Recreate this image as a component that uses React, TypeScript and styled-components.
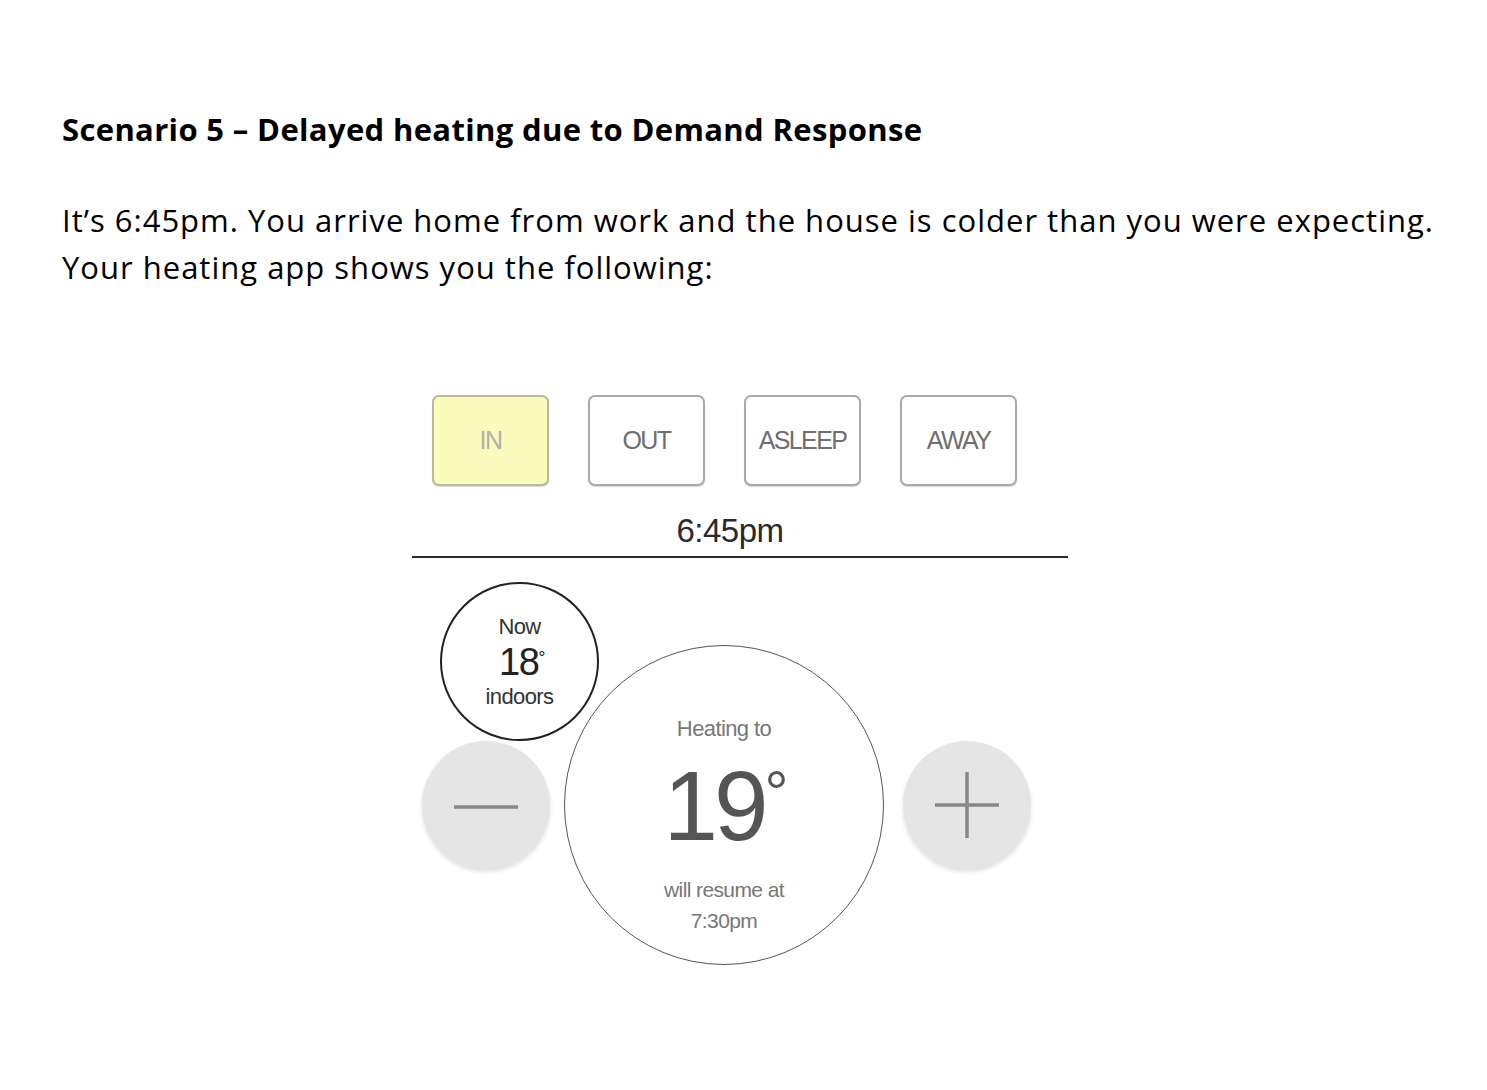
import React from "react";
import styled, { createGlobalStyle } from "styled-components";

const Global = createGlobalStyle`
  html, body { margin: 0; padding: 0; background: #fff; }
  body { font-family: "Open Sans", Lato, sans-serif; color: #000; }
`;

const Page = styled.div`
  width: 1487px;
  min-height: 1090px;
  box-sizing: border-box;
  padding: 106px 0 0 62px;
`;

const Heading = styled.h1`
  margin: 0;
  font-family: "Open Sans", Lato, sans-serif;
  font-weight: 700;
  font-size: 31px;
  line-height: 47px;
  letter-spacing: 0.35px;
`;

const Body = styled.p`
  margin: 44px 0 0;
  font-family: "Open Sans", Lato, sans-serif;
  font-weight: 400;
  font-size: 31px;
  line-height: 47px;
  letter-spacing: 1px;
  white-space: nowrap;
`;

const Widget = styled.div`
  margin: 104px 0 0 350px;
  width: 656px;
  font-family: "Liberation Sans", Arial, sans-serif;
`;

const ModeRow = styled.div`
  display: flex;
  gap: 39px;
  padding-left: 20px;
`;

const ModeButton = styled.div<{ $active?: boolean }>`
  width: 117px;
  height: 91px;
  box-sizing: border-box;
  border: 2px solid ${(p) => (p.$active ? "#b8b89a" : "#a9a9a9")};
  border-radius: 7px;
  background: ${(p) => (p.$active ? "#fbfbbd" : "#fff")};
  color: ${(p) => (p.$active ? "#b0b0a8" : "#6e6e6e")};
  display: flex;
  align-items: center;
  justify-content: center;
  font-size: 25px;
  letter-spacing: -1.6px;
  box-shadow: 0 1px 1px rgba(0, 0, 0, 0.15);
`;

const TimeBar = styled.div`
  margin-top: 26px;
  padding-right: 20px;
  text-align: center;
  font-size: 33px;
  line-height: 38px;
  color: #2a2a2a;
  letter-spacing: -0.5px;
  padding-bottom: 6px;
  border-bottom: 2px solid #2a2a2a;
`;

const DialArea = styled.div`
  position: relative;
  padding: 87px 0 0 10px;
  height: 330px;
`;

const DialRow = styled.div`
  display: flex;
  align-items: center;
`;

const RoundButton = styled.div<{ $side: "left" | "right" }>`
  width: 128px;
  height: 128px;
  border-radius: 50%;
  background: #e5e5e5;
  box-shadow: 0 3px 4px rgba(0, 0, 0, 0.12);
  display: flex;
  align-items: center;
  justify-content: center;
  margin-right: ${(p) => (p.$side === "left" ? "14px" : "0")};
  margin-left: ${(p) => (p.$side === "right" ? "19px" : "0")};
`;

const MinusIcon = styled.svg`
  margin-top: 4px;
`;

const MainDial = styled.div`
  width: 320px;
  height: 320px;
  box-sizing: border-box;
  border-radius: 50%;
  border: 1.5px solid #555;
  display: flex;
  flex-direction: column;
  align-items: center;
  color: #777;
`;

const HeatingLabel = styled.div`
  margin-top: 69px;
  font-size: 22px;
  line-height: 28px;
  letter-spacing: -0.6px;
`;

const BigTemp = styled.div`
  margin-top: 15px;
  font-size: 98px;
  line-height: 96px;
  color: #555;
  letter-spacing: -4px;
  position: relative;
`;

const Resume = styled.div`
  margin-top: 20px;
  font-size: 21px;
  line-height: 31px;
  text-align: center;
  letter-spacing: -0.6px;
`;

const NowBubble = styled.div`
  position: absolute;
  left: 28px;
  top: 24px;
  width: 159px;
  height: 159px;
  box-sizing: border-box;
  border-radius: 50%;
  border: 2px solid #222;
  background: #fff;
  display: flex;
  flex-direction: column;
  align-items: center;
  justify-content: center;
  color: #222;
  z-index: 1;
`;

const NowLabel = styled.div`
  font-size: 22px;
  line-height: 30px;
  letter-spacing: -0.6px;
  color: #333;
`;

const NowTemp = styled.div`
  font-size: 38px;
  line-height: 40px;
  letter-spacing: -1.5px;
  margin-left: 4px;
`;

const Deg = styled.span<{ $size: number }>`
  font-size: ${(p) => p.$size}px;
  vertical-align: top;
  position: relative;
  top: ${(p) => -p.$size * 0.22}px;
`;

export default function App() {
  return (
    <>
      <Global />
      <Page>
        <Heading>Scenario 5 – Delayed heating due to Demand Response</Heading>
        <Body>
          It’s 6:45pm. You arrive home from work and the house is colder than you were expecting.
          <br />
          Your heating app shows you the following:
        </Body>
        <Widget>
          <ModeRow>
            <ModeButton $active>IN</ModeButton>
            <ModeButton>OUT</ModeButton>
            <ModeButton>ASLEEP</ModeButton>
            <ModeButton>AWAY</ModeButton>
          </ModeRow>
          <TimeBar>6:45pm</TimeBar>
          <DialArea>
            <NowBubble>
              <NowLabel>Now</NowLabel>
              <NowTemp>
                18<Deg $size={18}>°</Deg>
              </NowTemp>
              <NowLabel>indoors</NowLabel>
            </NowBubble>
            <DialRow>
              <RoundButton $side="left">
                <MinusIcon width="64" height="8" viewBox="0 0 64 8">
                  <line x1="0" y1="4" x2="64" y2="4" stroke="#888" strokeWidth="3.5" />
                </MinusIcon>
              </RoundButton>
              <MainDial>
                <HeatingLabel>Heating to</HeatingLabel>
                <BigTemp>
                  19<Deg $size={60}>°</Deg>
                </BigTemp>
                <Resume>
                  will resume at
                  <br />
                  7:30pm
                </Resume>
              </MainDial>
              <RoundButton $side="right">
                <svg width="64" height="66" viewBox="0 0 64 66">
                  <line x1="0" y1="33" x2="64" y2="33" stroke="#888" strokeWidth="3.5" />
                  <line x1="32" y1="0" x2="32" y2="66" stroke="#888" strokeWidth="3.5" />
                </svg>
              </RoundButton>
            </DialRow>
          </DialArea>
        </Widget>
      </Page>
    </>
  );
}
